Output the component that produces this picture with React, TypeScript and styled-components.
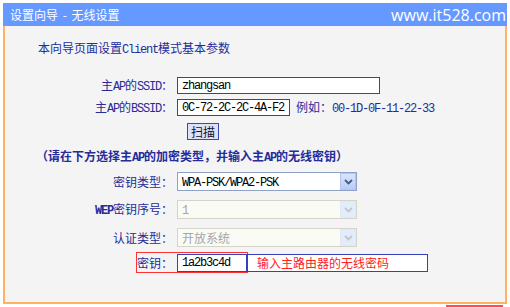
import React from "react";
import styled, { createGlobalStyle } from "styled-components";

const NAVY = "#252c9a";
const ORANGE = "#ffb164";
const FIELD_BLUE = "#3640b8";

const GlobalStyle = createGlobalStyle`
  html, body { margin: 0; padding: 0; background: #ffffff; }
  body {
    width: 510px;
    height: 307px;
    overflow: hidden;
    font-family: "Noto Sans CJK SC", "Noto Sans", sans-serif;
    font-size: 12px;
  }
`;

const Page = styled.div`
  width: 510px;
  height: 307px;
  box-sizing: border-box;
  padding: 3px 0 0 3px;
`;

const Frame = styled.div`
  width: 504px;
`;

const Header = styled.div`
  height: 23px;
  background: #6699ff;
  color: #ffffff;
  display: flex;
  align-items: center;
  justify-content: space-between;
  padding: 0 1px 0 7px;
`;

const HeaderTitle = styled.span`
  font-size: 12px;
  line-height: 12px;
  word-spacing: 2px;
`;

const Site = styled.span`
  font-family: "Open Sans", sans-serif;
  font-size: 16px;
  line-height: 16px;
`;

const Body = styled.div`
  height: 278px;
  box-sizing: border-box;
  background: #f4f4f4;
  border-left: 2px solid ${ORANGE};
  border-right: 2px solid ${ORANGE};
  border-bottom: 2px solid ${ORANGE};
  padding-top: 16px;
  display: flex;
  flex-direction: column;
  color: ${NAVY};
`;

const Title = styled.div`
  padding-left: 33px;
  height: 12px;
  line-height: 12px;
  white-space: nowrap;
`;

const Row = styled.div<{ $mt: number; $h: number }>`
  margin-top: ${(p) => p.$mt}px;
  height: ${(p) => p.$h}px;
  display: flex;
  align-items: center;
  white-space: nowrap;
`;

const Label = styled.div`
  width: 168px;
  text-align: right;
  line-height: 12px;
  margin-right: 4px;
  flex: none;
`;

const Lat = styled.span<{ $bold?: boolean }>`
  font-family: "Liberation Mono", "Courier New", monospace;
  font-size: 12px;
  letter-spacing: -1.2px;
  font-weight: ${(p) => (p.$bold ? "bold" : "inherit")};
`;

const Field = styled.div<{ $w: number; $h?: number }>`
  width: ${(p) => p.$w}px;
  height: ${(p) => p.$h ?? 17}px;
  box-sizing: border-box;
  border: 1px solid ${FIELD_BLUE};
  background: #ffffff;
  color: #000000;
  padding-left: 4px;
  display: flex;
  align-items: center;
  overflow: hidden;
  font-family: "Liberation Mono", "Courier New", monospace;
  font-size: 12px;
  letter-spacing: -1.2px;
  flex: none;
`;

const Example = styled.span`
  margin-left: 6px;
  line-height: 12px;
`;

const ScanButton = styled.div`
  margin-left: 182px;
  width: 32px;
  height: 17px;
  box-sizing: border-box;
  border: 1px solid #3b46b8;
  background: #dfe2f7;
  color: #111133;
  display: flex;
  align-items: center;
  justify-content: center;
  font-size: 12px;
`;

const Notice = styled.div`
  padding-left: 31px;
  height: 12px;
  line-height: 12px;
  font-weight: bold;
  white-space: nowrap;
`;

const Select = styled.div<{ $disabled?: boolean }>`
  width: 180px;
  height: 19px;
  box-sizing: border-box;
  border: 1px solid ${(p) => (p.$disabled ? "#d4d4c8" : "#8da2c4")};
  background: ${(p) => (p.$disabled ? "#fbfbf5" : "#ffffff")};
  color: ${(p) => (p.$disabled ? "#a6a6a6" : "#000000")};
  display: flex;
  align-items: center;
  padding-left: 4px;
  flex: none;
`;

const SelectText = styled.span`
  flex: 1;
  line-height: 12px;
`;

const Arrow = styled.div<{ $disabled?: boolean }>`
  width: 16px;
  height: 17px;
  box-sizing: border-box;
  border: 1px solid ${(p) => (p.$disabled ? "#e1e9f7" : "#b4c6ee")};
  background: ${(p) =>
    p.$disabled ? "#e3ecfb" : "linear-gradient(#d9e4fd, #b9cdf8)"};
  display: flex;
  align-items: center;
  justify-content: center;
`;

const KeyBox = styled.div`
  margin-left: 131px;
  height: 21px;
  box-sizing: border-box;
  border: 1px solid #ff3333;
  display: flex;
  align-items: center;
`;

const KeyLabel = styled.span`
  width: 36px;
  margin-right: 4px;
  line-height: 12px;
`;

const Hint = styled.div`
  margin-left: -1px;
  width: 181px;
  height: 18px;
  box-sizing: border-box;
  border: 1px solid ${FIELD_BLUE};
  background: #ffffff;
  color: #ff2222;
  display: flex;
  align-items: center;
  padding-left: 9px;
  line-height: 12px;
`;

const Footer = styled.div`
  display: flex;
  justify-content: flex-end;
  padding-right: 4px;
  margin-top: 1px;
`;

const RedTab = styled.div`
  width: 57px;
  height: 3px;
  background: #ff4d4d;
`;

function Mixed({ text, bold }: { text: string; bold?: boolean }) {
  const parts = text.split(/([\x21-\x7e]+)/).filter((p) => p !== "");
  return (
    <>
      {parts.map((p, i) =>
        /[\x21-\x7e]/.test(p) ? (
          <Lat key={i} $bold={bold}>{p}</Lat>
        ) : (
          <React.Fragment key={i}>{p}</React.Fragment>
        )
      )}
    </>
  );
}

function Chevron({ color }: { color: string }) {
  return (
    <svg width="9" height="6" viewBox="0 0 9 6">
      <path d="M1 1 L4.5 4.5 L8 1" fill="none" stroke={color} strokeWidth="1.8" />
    </svg>
  );
}

export default function App() {
  return (
    <Page>
      <GlobalStyle />
      <Frame>
        <Header>
          <HeaderTitle>设置向导 - 无线设置</HeaderTitle>
          <Site>www.it528.com</Site>
        </Header>
        <Body>
          <Title>
            <Mixed text="本向导页面设置Client模式基本参数" />
          </Title>

          <Row $mt={23} $h={17}>
            <Label><Mixed text="主AP的SSID：" /></Label>
            <Field $w={203}>zhangsan</Field>
          </Row>

          <Row $mt={5} $h={17}>
            <Label><Mixed text="主AP的BSSID：" /></Label>
            <Field $w={113}>0C-72-2C-2C-4A-F2</Field>
            <Example><Mixed text="例如：00-1D-0F-11-22-33" /></Example>
          </Row>

          <Row $mt={7} $h={17}>
            <ScanButton>扫描</ScanButton>
          </Row>

          <Row $mt={10} $h={12}>
            <Notice>
              <Mixed text="（请在下方选择主AP的加密类型，并输入主AP的无线密钥）" />
            </Notice>
          </Row>

          <Row $mt={10} $h={19}>
            <Label>密钥类型：</Label>
            <Select>
              <SelectText><Lat>WPA-PSK/WPA2-PSK</Lat></SelectText>
              <Arrow><Chevron color="#4a5a80" /></Arrow>
            </Select>
          </Row>

          <Row $mt={9} $h={19}>
            <Label><Lat $bold>WEP</Lat>密钥序号：</Label>
            <Select $disabled>
              <SelectText><Lat>1</Lat></SelectText>
              <Arrow $disabled><Chevron color="#c0c6d0" /></Arrow>
            </Select>
          </Row>

          <Row $mt={9} $h={19}>
            <Label>认证类型：</Label>
            <Select $disabled>
              <SelectText>开放系统</SelectText>
              <Arrow $disabled><Chevron color="#c0c6d0" /></Arrow>
            </Select>
          </Row>

          <Row $mt={5} $h={21}>
            <KeyBox>
              <KeyLabel>密钥：</KeyLabel>
              <Field $w={70} $h={18}>1a2b3c4d</Field>
            </KeyBox>
            <Hint>输入主路由器的无线密码</Hint>
          </Row>
        </Body>
        <Footer>
          <RedTab />
        </Footer>
      </Frame>
    </Page>
  );
}
